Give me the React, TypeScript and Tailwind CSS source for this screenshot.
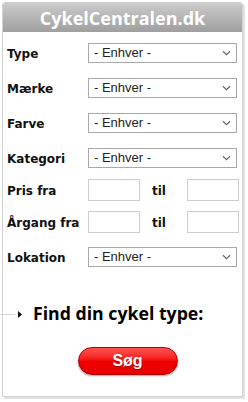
import React from 'react';

const labelFont = { fontFamily: '"DejaVu Sans", Verdana, sans-serif' };

const Chevron: React.FC = () => (
  <svg width="9" height="6" viewBox="0 0 9 6" className="absolute right-[6px] top-[7px] pointer-events-none">
    <path d="M1 1.2 L4.5 4.6 L8 1.2" fill="none" stroke="#666" strokeWidth="1.2" />
  </svg>
);

const SelectBox: React.FC = () => (
  <div className="relative w-[149px] h-[20px]">
    <div
      className="w-full h-full border border-[#a9a9a9] bg-white pl-[5px] text-[13px] leading-[18px] text-[#222]"
      style={{ fontFamily: '"Liberation Sans", Arial, sans-serif' }}
    >
      - Enhver -
    </div>
    <Chevron />
  </div>
);

const TextBox: React.FC = () => (
  <input type="text" className="w-[52px] h-[22px] border border-[#cdcdcd] bg-white outline-none" />
);

const Label: React.FC<{ text: string }> = ({ text }) => (
  <span className="w-[81px] shrink-0 pt-[2px] font-bold text-[12px] leading-[20px] text-[#111]" style={labelFont}>
    {text}
  </span>
);

const Til: React.FC = () => (
  <span className="w-[47px] pl-[12px] pt-[2px] font-bold text-[12px] leading-[20px] text-[#111]" style={labelFont}>
    til
  </span>
);

export default function App() {
  const selectRows = ['Type', 'Mærke', 'Farve', 'Kategori'];

  return (
    <div className="w-[248px] h-[402px] bg-white overflow-hidden">
      <div className="ml-[2px] mt-[2px] w-[241px] h-[395px] border border-[#d2d2d2] rounded-t-[3px] bg-white shadow-[2px_2px_1px_rgba(0,0,0,0.12)] flex flex-col">
        {/* header */}
        <div
          className="h-[29px] rounded-t-[2px] bg-gradient-to-b from-[#cbcbcb] to-[#9f9f9f] flex items-center justify-center text-white font-bold text-[18px] leading-none"
          style={{ fontFamily: '"Open Sans", sans-serif' }}
        >
          CykelCentralen.dk
        </div>

        <div className="pl-[4px] pt-[3px] flex flex-col">
          {selectRows.map((label) => (
            <div key={label} className="h-[35px] flex items-center">
              <Label text={label} />
              <SelectBox />
            </div>
          ))}

          <div className="h-[30px] flex items-center">
            <Label text="Pris fra" />
            <TextBox />
            <Til />
            <TextBox />
          </div>

          <div className="h-[33px] flex items-center">
            <Label text="Årgang fra" />
            <TextBox />
            <Til />
            <TextBox />
          </div>

          <div className="h-[38px] flex items-center">
            <Label text="Lokation" />
            <SelectBox />
          </div>
        </div>

        {/* find bike type */}
        <div className="mt-[26px] h-[24px] flex items-center -ml-[3px]">
          <div className="w-[15px] h-px bg-[#d5d5d5]" />
          <svg width="4" height="7" viewBox="0 0 4 7" className="ml-[3px]">
            <path d="M0 0 L4 3.5 L0 7 Z" fill="#111" />
          </svg>
          <span
            className="ml-[11px] font-bold text-[17.7px] leading-none text-black"
            style={{ fontFamily: '"Open Sans", sans-serif' }}
          >
            Find din cykel type:
          </span>
        </div>

        <div className="mt-[21px] flex justify-center pl-[10px]">
          <button
            className="w-[100px] h-[28px] rounded-full border border-[#b30000] bg-gradient-to-b from-[#ff5050] via-[#f20000] to-[#e60000] text-white font-bold text-[16px] leading-none shadow-[0_1px_2px_rgba(0,0,0,0.35)] [text-shadow:0_1px_1px_rgba(0,0,0,0.3)]"
            style={{ fontFamily: '"Liberation Sans", Arial, sans-serif' }}
          >
            Søg
          </button>
        </div>
      </div>
    </div>
  );
}
